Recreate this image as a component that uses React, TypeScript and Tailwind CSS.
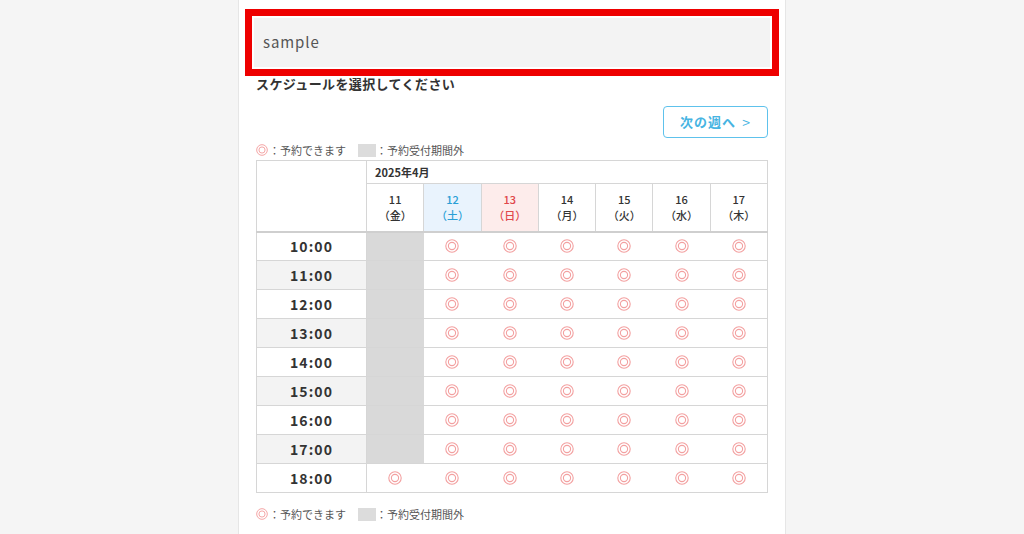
import React from "react";

const days = [
  { d: "11", w: "金", kind: "" },
  { d: "12", w: "土", kind: "sat" },
  { d: "13", w: "日", kind: "sun" },
  { d: "14", w: "月", kind: "" },
  { d: "15", w: "火", kind: "" },
  { d: "16", w: "水", kind: "" },
  { d: "17", w: "木", kind: "" },
];

const times = ["10:00", "11:00", "12:00", "13:00", "14:00", "15:00", "16:00", "17:00", "18:00"];

function Mark({ size = 14 }: { size?: number }) {
  return (
    <svg width={size} height={size} viewBox="0 0 14 14" className="inline-block">
      <circle cx="7" cy="7" r="6.2" fill="none" stroke="#f3a0a0" strokeWidth="1.1" />
      <circle cx="7" cy="7" r="3.6" fill="none" stroke="#f3a0a0" strokeWidth="1.1" />
    </svg>
  );
}

function Legend() {
  return (
    <div className="flex items-center text-[11px] text-[#555] h-4">
      <Mark size={12} />
      <span className="ml-[1px]">：予約できます</span>
      <span className="ml-[12px] inline-block w-[18px] h-[13px] bg-[#dcdcdc]" />
      <span>：予約受付期間外</span>
    </div>
  );
}

export default function App() {
  return (
    <div
      className="min-h-[534px] bg-[#f5f5f5] flex justify-center"
      style={{ fontFamily: '"Noto Sans CJK JP", "Noto Sans", sans-serif' }}
    >
      <div className="w-[548px] bg-white border-x border-[#e6e6e6] px-[17px] pt-[9px] pb-4">
        <div className="-ml-[11px] -mr-[11px] border-[7px] border-[#ee0000] p-[2px]">
          <div className="h-[49px] bg-[#f3f3f3] flex items-center px-[9px] text-[15px] tracking-[0.06em] text-[#555]">
            sample
          </div>
        </div>

        <h2 className="-mt-[1px] text-[13px] font-bold tracking-[0.03em] text-[#333] leading-[18px]">
          スケジュールを選択してください
        </h2>

        <div className="flex justify-end mt-[13px]">
          <button className="w-[105px] h-[32px] rounded-[4px] border border-[#5ec2ec] text-[#47b4e2] text-[13px] font-bold tracking-[0.08em] flex items-center justify-center gap-[6px]">
            次の週へ <span className="font-normal text-[14px]">&gt;</span>
          </button>
        </div>

        <div className="mt-[4px]">
          <Legend />
        </div>

        <table className="mt-[2px] w-full border-collapse table-fixed text-[#333]">
          <colgroup>
            <col className="w-[110px]" />
            {days.map((d) => (
              <col key={d.d} />
            ))}
          </colgroup>
          <thead>
            <tr className="h-[23px]">
              <th rowSpan={2} className="border border-[#d6d6d6] border-b-2 border-b-[#cfcfcf]" />
              <th colSpan={7} className="border border-[#d6d6d6] text-left pl-[8px] text-[11px] font-bold">
                2025年4月
              </th>
            </tr>
            <tr className="h-[48px]">
              {days.map((d) => (
                <th
                  key={d.d}
                  className={
                    "border border-[#d6d6d6] border-b-2 border-b-[#cfcfcf] text-[11px] font-medium leading-[16px] " +
                    (d.kind === "sat"
                      ? "bg-[#e9f3fd] text-[#2a9fd6]"
                      : d.kind === "sun"
                      ? "bg-[#fdeceb] text-[#e0474a]"
                      : "text-[#333]")
                  }
                >
                  <div>{d.d}</div>
                  <div>（{d.w}）</div>
                </th>
              ))}
            </tr>
          </thead>
          <tbody>
            {times.map((t, i) => (
              <tr key={t} className="h-[29px]">
                <td
                  className={
                    "border border-[#d6d6d6] text-center text-[14px] font-bold tracking-[0.08em] text-[#333] " +
                    (i % 2 === 1 ? "bg-[#f3f3f3]" : "bg-white")
                  }
                >
                  {t}
                </td>
                {days.map((d, j) => {
                  const closed = j === 0 && i < 8;
                  return (
                    <td
                      key={d.d}
                      className={
                        closed
                          ? "bg-[#d9d9d9] border-y border-y-[#d6d6d6] border-l border-l-[#d6d6d6]"
                          : "border-y border-y-[#d6d6d6] text-center align-middle" + (j === 6 ? " border-r border-r-[#d6d6d6]" : "")
                      }
                    >
                      {!closed && (
                        <div className="flex justify-center">
                          <Mark />
                        </div>
                      )}
                    </td>
                  );
                })}
              </tr>
            ))}
          </tbody>
        </table>

        <div className="mt-[13px]">
          <Legend />
        </div>
      </div>
    </div>
  );
}
